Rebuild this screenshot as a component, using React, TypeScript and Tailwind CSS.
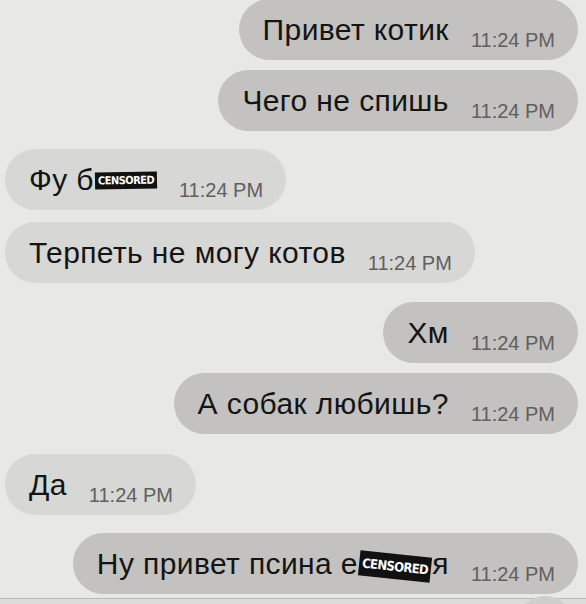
import React from 'react'

type Msg = { out: boolean; text: React.ReactNode; gapTop: number }

const Censored: React.FC<{ className?: string }> = ({ className }) => (
  <span
    className={
      'inline-flex items-center justify-center bg-[#111] text-white uppercase leading-none ' +
      "font-['DejaVu_Sans_Condensed','DejaVu_Sans',sans-serif] font-bold tracking-tighter " +
      (className || '')
    }
  >
    CENSORED
  </span>
)

const Bubble: React.FC<{ out: boolean; children: React.ReactNode }> = ({ out, children }) => (
  <div
    className={
      'flex items-center h-[61px] rounded-full pl-[24px] pr-[23px] ' +
      (out ? 'self-end bg-[#c3c2c0]' : 'self-start bg-[#d7d7d5]')
    }
  >
    <span className="text-[30px] tracking-[0.4px] leading-none text-[#141414] whitespace-nowrap flex items-center">
      {children}
    </span>
    <span className="ml-[22px] mt-[20px] text-[20px] leading-none text-[#5f5f5f] whitespace-nowrap">11:24 PM</span>
  </div>
)

const messages: Msg[] = [
  { out: true, text: 'Привет котик', gapTop: 0 },
  { out: true, text: 'Чего не спишь', gapTop: 10 },
  {
    out: false,
    gapTop: 18,
    text: (
      <>
        Фу б
        <Censored className="ml-[1px] mt-[2px] h-[17px] px-[3px] text-[11px] -rotate-1" />
      </>
    ),
  },
  { out: false, text: 'Терпеть не могу котов', gapTop: 12 },
  { out: true, text: 'Хм', gapTop: 19 },
  { out: true, text: 'А собак любишь?', gapTop: 10 },
  { out: false, text: 'Да', gapTop: 20 },
  {
    out: true,
    gapTop: 18,
    text: (
      <>
        Ну привет псина е
        <Censored className="ml-[1px] mr-[1px] mt-[6px] h-[25px] px-[3px] text-[13px] rotate-6" />
        я
      </>
    ),
  },
]

export default function App() {
  return (
    <div className="relative w-[586px] h-[604px] overflow-hidden bg-[#e8e8e6] font-['Liberation_Sans',Arial,sans-serif]">
      <div className="flex flex-col pl-[5px] pr-[8px] mt-[-1px]">
        {messages.map((m, i) => (
          <div key={i} className="flex flex-col" style={{ marginTop: m.gapTop }}>
            <Bubble out={m.out}>{m.text}</Bubble>
          </div>
        ))}
      </div>
      {/* bottom edge: input bar line and next element peeking */}
      <div className="absolute left-0 right-0 bottom-0 h-[6px] bg-[#dcdcda] border-t border-[#b9b9b7]" />
      <div className="absolute right-[12px] bottom-[-50px] w-[58px] h-[58px] rounded-full bg-[#cfcfcd]" />
    </div>
  )
}
